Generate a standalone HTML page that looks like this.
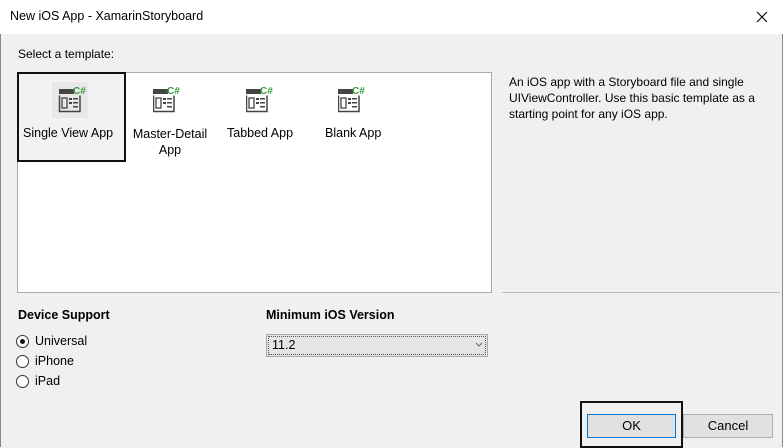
<!DOCTYPE html><html><head><style>
body{margin:0;width:783px;height:447px;background:#f0f0f0;font-family:"Liberation Sans",sans-serif;font-size:12px;color:#000;position:relative;overflow:hidden}
.a{position:absolute}
.title{left:0;top:0;width:783px;height:34px;background:#fff}
.list{left:17px;top:72px;width:473px;height:219px;background:#fff;border:1px solid #aaa}
.radio{position:absolute;width:11px;height:11px;border:1px solid #333;border-radius:50%;background:#fff}
.btn{position:absolute;background:#e1e1e1;border:1px solid #adadad;text-align:center;line-height:22px;font-size:13px}
</style></head><body>
<div class="a title"></div>
<div class="a" style="left:10px;top:9px;font-size:12.5px">New iOS App - XamarinStoryboard</div>
<svg class="a" style="left:756px;top:11px" width="12" height="12"><path d="M1 1L11 11M11 1L1 11" stroke="#000" stroke-width="1.1"/></svg>
<div class="a" style="left:0;top:34px;width:1px;height:413px;background:#888"></div>
<div class="a" style="left:782px;top:34px;width:1px;height:413px;background:#888"></div>
<div class="a" style="left:18px;top:47px">Select a template:</div>
<div class="a list"></div>
<div class="a" style="left:17px;top:72px;width:105px;height:86px;border:2px solid #111;background:#f2f2f2"></div>
<svg width="0" height="0" style="position:absolute"><defs><g id="ic">
<rect x="0" y="3" width="15" height="5" fill="#444"/><text x="14" y="8" font-size="10" font-weight="bold" fill="#3a9a3a" font-family="Liberation Sans">C#</text>
<path d="M21 9.5V25.5H0.5V9.5" fill="none" stroke="#444" stroke-width="1.5"/>
<rect x="3" y="12" width="5" height="10" fill="none" stroke="#444" stroke-width="1.3"/>
<rect x="10" y="12" width="3" height="2" fill="#444"/><rect x="14" y="12" width="5" height="1.5" fill="#444"/>
<rect x="10" y="16" width="3" height="2" fill="#444"/><rect x="14" y="16" width="5" height="1.5" fill="#444"/>
<rect x="14" y="20" width="5" height="1.5" fill="#444"/></g></defs></svg>
<svg class="a" style="left:52px;top:82px" width="36" height="36"><rect width="36" height="36" fill="#e8e8e8"/><use href="#ic" x="7" y="4"/></svg>
<svg class="a" style="left:153px;top:86px" width="32" height="30"><use href="#ic"/></svg>
<svg class="a" style="left:246px;top:86px" width="32" height="30"><use href="#ic"/></svg>
<svg class="a" style="left:338px;top:86px" width="32" height="30"><use href="#ic"/></svg>
<div class="a" style="left:23px;top:126px;font-size:12.5px">Single View App</div>
<div class="a" style="left:120px;top:126px;width:100px;text-align:center;line-height:16px;font-size:12.5px">Master-Detail<br>App</div>
<div class="a" style="left:227px;top:126px;font-size:12.5px">Tabbed App</div>
<div class="a" style="left:325px;top:126px;font-size:12.5px">Blank App</div>
<div class="a" style="left:509px;top:74px;line-height:16px;font-size:12px;width:270px">An iOS app with a Storyboard file and single UIViewController. Use this basic template as a starting point for any iOS app.</div>
<div class="a" style="left:502px;top:292px;width:278px;height:1px;background:#bbb"></div>
<div class="a" style="left:18px;top:308px;font-weight:bold;font-size:12.5px">Device Support</div>
<div class="a" style="left:266px;top:308px;font-weight:bold;font-size:12.5px">Minimum iOS Version</div>
<div class="radio" style="left:16px;top:335px"></div><div class="a" style="left:20px;top:339px;width:5px;height:5px;border-radius:50%;background:#111"></div>
<div class="radio" style="left:16px;top:355px"></div><div class="radio" style="left:16px;top:375px"></div>
<div class="a" style="left:35px;top:334px;font-size:12.5px">Universal</div>
<div class="a" style="left:35px;top:354px;font-size:12.5px">iPhone</div>
<div class="a" style="left:35px;top:374px;font-size:12.5px">iPad</div>
<div class="a" style="left:266px;top:334px;width:220px;height:21px;background:#e5e5e5;border:1px solid #aaa"></div>
<div class="a" style="left:268px;top:336px;width:216px;height:17px;border:1px dotted #555"></div>
<div class="a" style="left:272px;top:338px;font-size:12.5px">11.2</div>
<svg class="a" style="left:475px;top:342px" width="8" height="5"><path d="M1 1L4 4L7 1" stroke="#666" fill="none"/></svg>
<div class="a" style="left:580px;top:401px;width:99px;height:43px;border:2px solid #111"></div>
<div class="btn" style="left:587px;top:414px;width:87px;height:22px;border-color:#0078d7">OK</div>
<div class="btn" style="left:683px;top:414px;width:88px;height:22px">Cancel</div>
</body></html>
